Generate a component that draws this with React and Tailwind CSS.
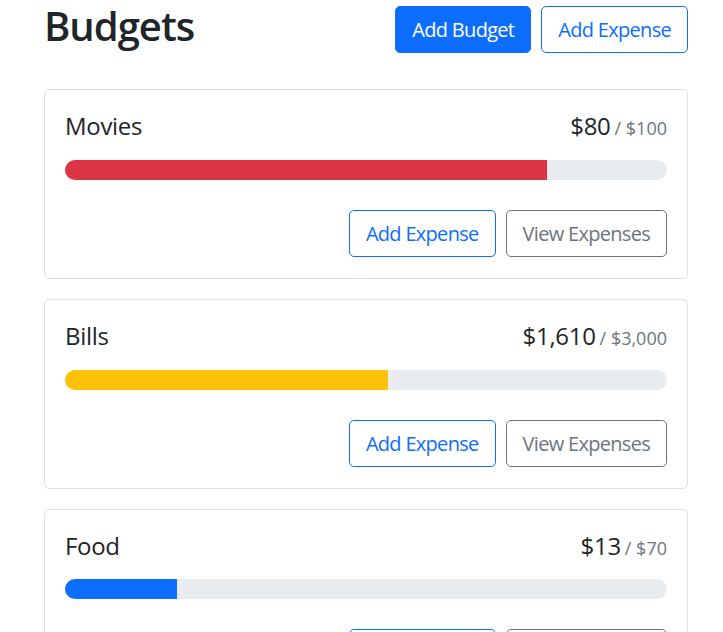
import React from "react";

const budgets = [
  { name: "Movies", amount: "$80", max: "$100", pct: 80, bar: "bg-[#dc3545]" },
  { name: "Bills", amount: "$1,610", max: "$3,000", pct: 53.67, bar: "bg-[#ffc107]" },
  { name: "Food", amount: "$13", max: "$70", pct: 18.57, bar: "bg-[#0d6efd]" },
];

const btn = "h-[47px] px-4 text-[20px] tracking-[-0.7px] rounded-[5px] border";

// one budget card: name, spent / max, progress bar and actions
const BudgetCard = ({ name, amount, max, pct, bar }) => (
  <div className="border border-[#dfdfdf] rounded-[5px] bg-white px-5 pt-5 pb-[21px] mb-[20px]">
    <div className="flex items-baseline justify-between leading-[1.2] text-[#212529] mt-[2px]">
      <div className="text-[24px] tracking-[-0.3px]">{name}</div>
      <div className="flex items-baseline">
        <span className="text-[24px] tracking-[-0.3px]">{amount}</span>
        <span className="text-[18px] text-[#6c757d] ms-1">/ {max}</span>
      </div>
    </div>
    <div className="mt-[19px] h-5 w-full rounded-full bg-[#e9ecef] overflow-hidden flex">
      <div className={`h-full ${bar}`} style={{ width: `${pct}%` }} />
    </div>
    <div className="flex justify-end gap-[10px] mt-[30px]">
      <button className={`${btn} pt-[2px] border-[#0d6efd] text-[#0d6efd] bg-white`}>Add Expense</button>
      <button className={`${btn} pt-[2px] border-[#6c757d] text-[#6c757d] bg-white`}>View Expenses</button>
    </div>
  </div>
);

export default function App() {
  return (
    <div className="min-h-screen bg-white font-['Open_Sans',sans-serif] text-[#212529]">
      <div className="w-[644px] ml-[44px] pt-[6px]">
        <div className="flex items-start gap-[10px] mb-[36px]">
          <h1 className="me-auto text-[40px] font-semibold leading-[1.2] tracking-[-1px] -mt-[4px]">Budgets</h1>
          <button className={`${btn} bg-[#0d6efd] text-white border-[#0d6efd]`}>Add Budget</button>
          <button className={`${btn} border-[#0d6efd] text-[#0d6efd] bg-white`}>Add Expense</button>
        </div>
        {budgets.map((b) => (
          <BudgetCard key={b.name} {...b} />
        ))}
      </div>
    </div>
  );
}
